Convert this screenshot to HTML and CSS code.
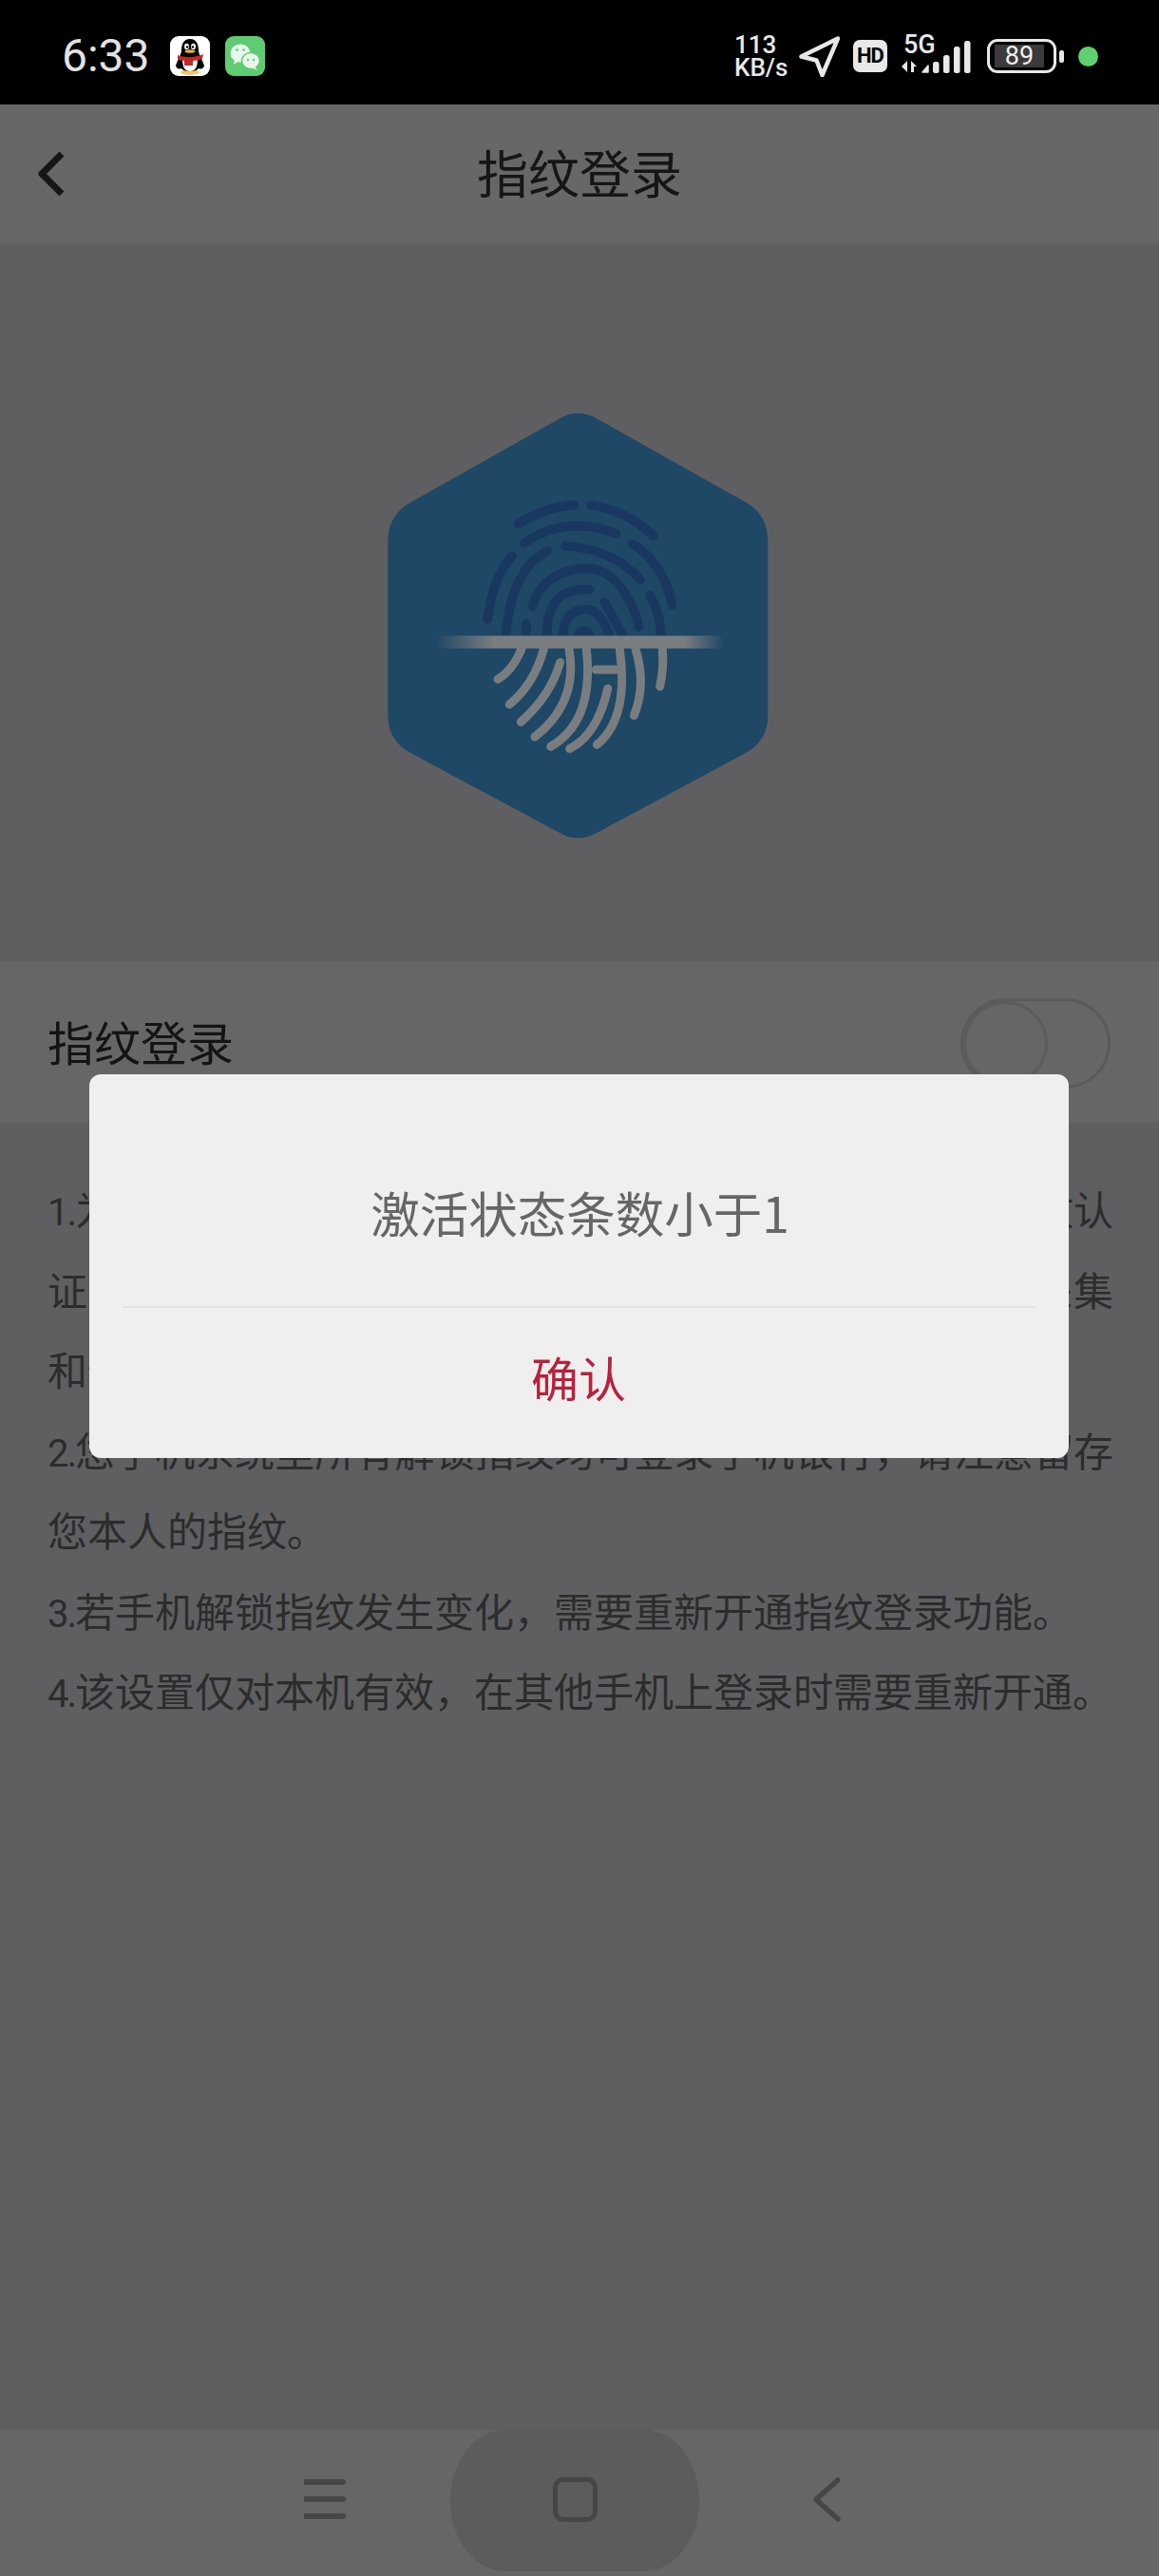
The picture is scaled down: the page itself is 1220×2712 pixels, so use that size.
FILE: index.html
```html
<!DOCTYPE html>
<html>
  <head>
    <title>指纹登录</title>
    <meta charset="utf-8">
    <link rel="stylesheet" href="styles.css">
  </head>
  <body>
    <div id="page">
      <div class="status-bar">
        <span class="time">6:33</span>
        <svg class="app-icon qq" width="42" height="42" viewBox="0 0 42 42">
          <rect width="42" height="42" rx="9" fill="#fff"/>
          <ellipse cx="21" cy="38" rx="10" ry="3" fill="#f2c66d"/>
          <path d="M21 3C14 3 12 9 12 15C12 19 8 25 6 31C7 35 10 35 12 34C14 38 28 38 30 34C32 35 35 35 36 31C34 25 30 19 30 15C30 9 28 3 21 3Z" fill="#050505"/>
          <path d="M13 23C13 32 15 37 21 37C27 37 29 32 29 23Z" fill="#fff"/>
          <ellipse cx="17.500" cy="11" rx="2.400" ry="3.200" fill="#fff"/>
          <ellipse cx="24.500" cy="11" rx="2.400" ry="3.200" fill="#fff"/>
          <circle cx="18" cy="11.500" r="1.200" fill="#000"/>
          <circle cx="24" cy="11.500" r="1.200" fill="#000"/>
          <ellipse cx="21" cy="16" rx="5.500" ry="1.800" fill="#e9ad27"/>
          <path d="M8 20C15 23 27 23 35 19L34 24C30 25 27 26 24 26L24 31L15 31L15 26C12 26 10 25 8 24Z" fill="#c6282a"/>
        </svg>
        <svg class="app-icon wechat" width="42" height="42" viewBox="0 0 42 42">
          <rect width="42" height="42" rx="9" fill="#5fcb73"/>
          <ellipse cx="16" cy="18" rx="10.500" ry="9.500" fill="#e9f6e9"/>
          <path d="M10 24L9 30L15 26Z" fill="#e9f6e9"/>
          <ellipse cx="27" cy="26" rx="9.500" ry="8.500" fill="#e9f6e9" stroke="#5fcb73" stroke-width="1.500"/>
          <path d="M31 32L34 36L27 33Z" fill="#e9f6e9"/>
          <circle cx="12.500" cy="14.500" r="1.300" fill="#5fcb73"/>
          <circle cx="19.500" cy="14.500" r="1.300" fill="#5fcb73"/>
          <circle cx="24" cy="25" r="1.200" fill="#5fcb73"/>
          <circle cx="30" cy="25" r="1.200" fill="#5fcb73"/>
        </svg>
        <div class="status-right">
          <div class="speed"><span>113</span><span>KB/s</span></div>
          <svg class="locate" width="43" height="43" viewBox="0 0 43 43">
            <path d="M2.500 21.500L41 2.500L24.500 41L18.500 25.500Z" fill="none" stroke="#e8e8e8" stroke-width="4.500" stroke-linejoin="round"/>
          </svg>
          <span class="hd">HD</span>
          <div class="signal">
            <span class="net">5G</span>
            <svg width="74" height="36" viewBox="0 0 74 36">
              <path d="M7 21V33L1 27Z" fill="#e8e8e8"/>
              <path d="M11 21L17 27H14V33H11Z" fill="#e8e8e8"/>
              <path d="M23 33L29 26V33Z" fill="#e8e8e8" stroke="#e8e8e8" stroke-width="1.500" stroke-linejoin="round"/>
              <rect x="34" y="22" width="6.500" height="12" rx="2.500" fill="#e8e8e8"/>
              <rect x="45" y="15" width="6.500" height="19" rx="2.500" fill="#e8e8e8"/>
              <rect x="56" y="6" width="6.500" height="28" rx="2.500" fill="#e8e8e8"/>
              <rect x="67" y="0" width="6.500" height="34" rx="2.500" fill="#e8e8e8"/>
            </svg>
          </div>
          <div class="battery"><span class="level">89</span></div>
          <span class="battery-tip"></span>
          <span class="dot"></span>
        </div>
      </div>

      <div class="header">
        <svg class="back" width="30" height="48" viewBox="0 0 30 48">
          <path d="M26 3L5 24L26 45" fill="none" stroke="#161616" stroke-width="7" stroke-linejoin="round"/>
        </svg>
        <h1 class="title">指纹登录</h1>
      </div>

      <div class="hero">
        <svg width="460" height="490" viewBox="0 0 1380 1470">
          <defs>
            <linearGradient id="scan">
              <stop offset="0" stop-color="#7a7d80" stop-opacity="0"/>
              <stop offset="0.07" stop-color="#7a7d80" stop-opacity="0.35"/>
              <stop offset="0.2" stop-color="#7a7d80"/>
              <stop offset="0.86" stop-color="#7a7d80"/>
              <stop offset="1" stop-color="#7a7d80" stop-opacity="0"/>
            </linearGradient>
          </defs>
          <path d="M630 92Q688 58 748 92L1215 355Q1288 395 1288 480V1030Q1288 1110 1215 1150L748 1400Q688 1434 630 1400L163 1150Q88 1110 88 1030V480Q88 395 163 355Z" fill="#1f4766"/>
          <g fill="none" stroke="#18385f" stroke-width="29" stroke-linecap="round">
            <path d="M500 425Q580 372 677 365"/>
            <path d="M730 366Q840 380 925 462"/>
            <path d="M518 485Q650 395 808 455"/>
            <path d="M860 488Q960 550 985 680"/>
            <path d="M480 527Q420 590 403 725"/>
            <path d="M592 510Q480 565 460 775"/>
            <path d="M648 495Q790 500 885 600"/>
            <path d="M915 650Q950 710 950 775"/>
            <path d="M525 775V740"/>
            <path d="M545 685C565 590 680 550 750 570C810 590 860 660 880 750"/>
            <path d="M590 775C590 690 620 625 725 632"/>
            <path d="M772 672L830 775"/>
            <path d="M642 775C640 725 670 695 712 695C750 695 775 735 785 775"/>
            <path d="M690 775Q705 750 725 775"/>
          </g>
          <rect x="240" y="778" width="910" height="40" fill="url(#scan)"/>
          <g fill="none" stroke="#7a7d80" stroke-width="27" stroke-linecap="round">
            <path d="M435 915Q480 890 510 820"/>
            <path d="M472 995Q550 930 580 820"/>
            <path d="M508 1050Q600 970 632 862"/>
            <path d="M552 1097Q690 990 660 820"/>
            <path d="M602 1128Q740 1050 715 820"/>
            <path d="M662 1135Q750 1090 782 945"/>
            <path d="M748 1122Q850 1040 820 820"/>
            <path d="M865 1030Q905 930 870 820"/>
            <path d="M947 938Q960 880 955 820"/>
            <path d="M745 885H820"/>
          </g>
        </svg>
      </div>

      <div class="switch-row">
        <span class="switch-label">指纹登录</span>
        <div class="toggle"><span class="knob"></span></div>
      </div>

      <div class="notes">
        <p><span class="num">1.</span>为了您的账户安全，指纹登录功能需调用手机系统的指纹认证，您的指纹信息仅保存在手机系统中，我行不会进行采集和保存您的指纹信息。</p>
        <p><span class="num">2.</span>您手机系统里所有解锁指纹均可登录手机银行，请注意留存您本人的指纹。</p>
        <p class="plain"><span class="num">3.</span>若手机解锁指纹发生变化，需要重新开通指纹登录功能。</p>
        <p class="plain"><span class="num">4.</span>该设置仅对本机有效，在其他手机上登录时需要重新开通。</p>
      </div>

      <div class="nav-bar">
        <div class="nav-menu"><span></span><span></span><span></span></div>
        <div class="nav-home"><span class="home-square"></span></div>
        <svg class="nav-back" width="29" height="47" viewBox="0 0 29 47">
          <path d="M26 3L3 23.500L26 44" fill="none" stroke="#464646" stroke-width="5.500" stroke-linecap="round" stroke-linejoin="round"/>
        </svg>
      </div>

      <div class="dialog-layer">
        <div class="dialog">
          <div class="dialog-msg">激活状态条数小于1</div>
          <div class="dialog-btn">确认</div>
        </div>
      </div>
    </div>
  </body>
</html>
```

FILE: styles.css
```css
body { margin: 0; background: #5f5f61; font-family: "Noto Sans CJK SC", "Noto Sans", sans-serif; }

#page { position: relative; width: 1220px; height: 2712px; display: flex; flex-direction: column; overflow: hidden; }

/* status bar */
.status-bar { height: 110px; box-sizing: border-box; padding: 8px 0 0 65px; background: #000; display: flex; align-items: center; color: #e8e8e8; font-family: Roboto, sans-serif; }
.time { width: 114px; font-size: 48px; color: #e2e2e2; line-height: 1; }
.wechat { margin-left: 16px; }
.status-right { margin-left: auto; padding-right: 64px; display: flex; align-items: center; }
.speed { width: 68px; display: flex; flex-direction: column; font-size: 26px; font-weight: 500; line-height: 24px; }
.locate { display: block; }
.hd { width: 36px; height: 34px; margin-left: 14px; background: #e8e8e8; border-radius: 7px; color: #000; font-size: 22px; font-weight: 700; letter-spacing: -1px; line-height: 34px; text-align: center; }
.signal { position: relative; width: 74px; height: 40px; margin-left: 14px; }
.signal svg { position: absolute; left: 0; top: 4px; }
.net { position: absolute; left: 3px; top: -6px; font-size: 27px; font-weight: 500; line-height: 28px; }
.battery { width: 73px; height: 36px; box-sizing: border-box; margin-left: 17px; padding: 3px 0 0 5px; border: 3px solid #e8e8e8; border-radius: 11px; }
.level { display: block; width: 52px; height: 24px; background: #3a3a3a; color: #f0f0f0; font-size: 27px; line-height: 24px; text-align: center; }
.battery-tip { width: 5px; height: 13px; margin-left: 3px; background: #e8e8e8; border-radius: 2px; }
.dot { width: 21px; height: 21px; margin-left: 15px; background: #5fd06f; border-radius: 50%; }

/* header */
.header { position: relative; height: 146px; background: #676767; display: flex; align-items: center; justify-content: center; }
.back { position: absolute; left: 39px; top: 49px; }
.title { margin: 0 0 5px; font-size: 54px; font-weight: 400; color: #161616; line-height: 1; }

/* hero */
.hero { height: 756px; display: flex; justify-content: center; }
.hero svg { margin-top: 154px; margin-right: 2px; }

.switch-row { height: 170px; box-sizing: border-box; padding: 0 51px 0 50px; background: #666; display: flex; align-items: center; justify-content: space-between; }
.switch-label { margin-bottom: 3px; font-size: 49px; color: #141414; line-height: 1; }
.toggle { width: 158px; height: 95px; box-sizing: border-box; margin-top: 2px; border: 3px solid #5a5a5a; border-radius: 48px; }
.knob { display: block; width: 89px; height: 89px; box-sizing: border-box; border: 3px solid #5c5c5c; border-radius: 50%; }

/* notes */
.notes { flex: 1; padding: 48px 48px 0 50px; font-size: 42px; color: #2c2c2c; line-height: 84.500px; }
.notes p { margin: 0; text-align: justify; }
.notes p.plain { text-align: left; }
.num { font-family: Roboto, sans-serif; font-size: 40px; letter-spacing: -2px; line-height: 1; }

/* nav bar */
.nav-bar { height: 154px; background: #666; display: flex; align-items: flex-start; }
.nav-menu { width: 44px; margin: 52px 0 0 320px; display: flex; flex-direction: column; gap: 12px; }
.nav-menu span { height: 6px; background: #464646; border-radius: 0 3px 3px 0; }
.nav-home { width: 262px; height: 149px; margin-left: 110px; background: #5c5c5c; border-radius: 58px / 74px; display: flex; justify-content: center; }
.home-square { width: 47px; height: 47px; box-sizing: border-box; margin-top: 50px; border: 5px solid #464646; border-radius: 11px; }
.nav-back { margin: 50px 0 0 120px; }

/* dialog */
.dialog-layer { position: absolute; left: 0; right: 0; top: 1131px; display: flex; justify-content: center; }
.dialog { width: 1031px; height: 404px; box-sizing: border-box; margin-right: 2px; padding: 0 35px; background: #efefef; border-radius: 12px; text-align: center; }
.dialog-msg { height: 246px; box-sizing: border-box; padding: 109px 0 0 3px; border-bottom: 2px solid #e4e4e4; font-size: 51.500px; color: #666; line-height: 72px; }
.dialog-btn { padding-top: 36px; font-size: 50px; color: #b8213c; line-height: 72px; }
```
